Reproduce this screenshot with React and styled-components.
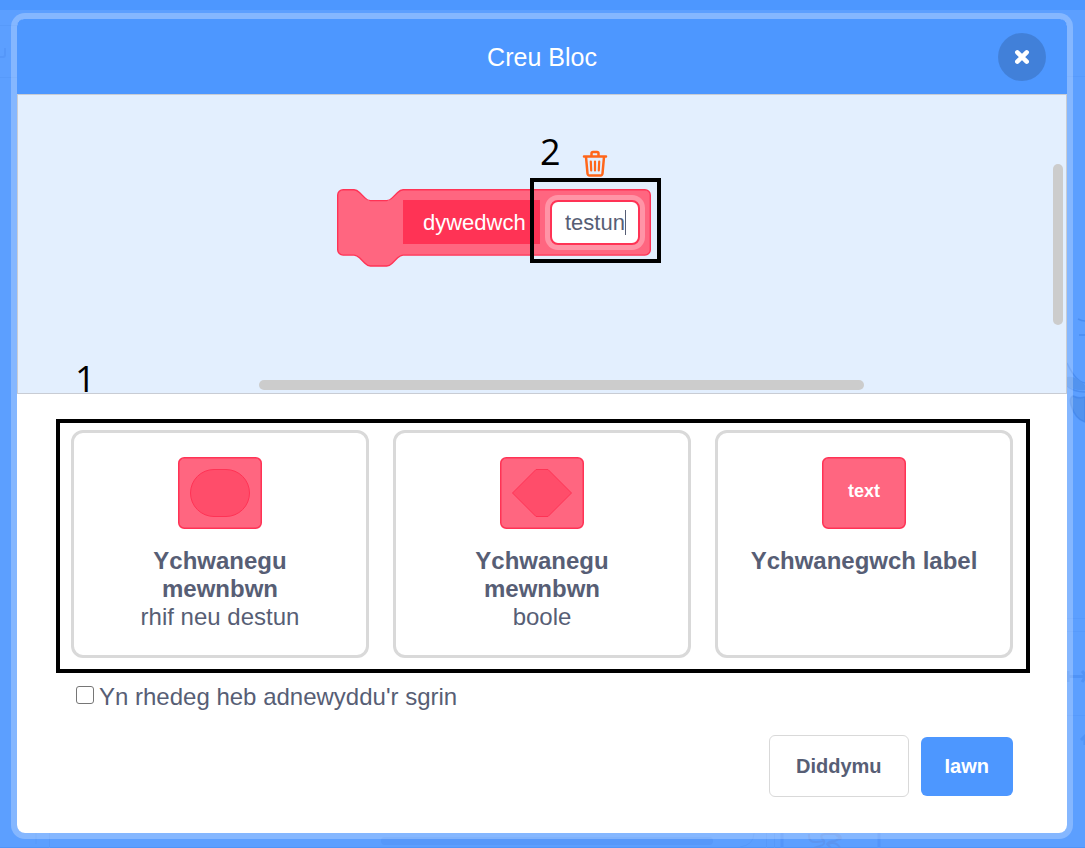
import React, { useState } from "react";
import styled, { createGlobalStyle } from "styled-components";

const color = {
  blue: "#4d97ff",
  backdrop: "#5c9fff",
  canvas: "#e3effe",
  text: "#575e75",
  line: "#d9d9d9",
  pink: "#ff6680",
  pinkMid: "#ff4d6a",
  pinkDark: "#ff3355",
};

const GlobalStyle = createGlobalStyle`
  *, *::before, *::after { box-sizing: border-box; }
  body {
    margin: 0;
    background: ${color.backdrop};
    color: ${color.text};
    font-family: "Liberation Sans", Arial, Helvetica, sans-serif;
  }
  button, input { font-family: inherit; margin: 0; }
`;

const Page = styled.div`
  position: relative;
  display: flex;
  min-height: 100vh;
  padding: 13px 12px 9px 11px;
  overflow: hidden;
`;

const Backdrop = styled.div`
  position: absolute;
  inset: 0;
  border-top: 10px solid ${color.blue};
  border-bottom: 1px solid #4f94f8;
`;

const EdgeArt = styled.svg`
  position: absolute;
  top: -10px;
  ${(p) => p.$side}: 0;
`;

const BottomArt = styled.svg`
  position: absolute;
  left: 0;
  bottom: -1px;
`;

const Modal = styled.main`
  position: relative;
  flex: 1;
  display: flex;
  flex-direction: column;
  border: 6px solid rgba(255, 255, 255, 0.25);
  border-radius: 14px;
  background: #fff;
  background-clip: padding-box;
`;

const Header = styled.header`
  display: grid;
  grid-template-columns: 48px 1fr 48px;
  align-items: center;
  height: 75px;
  padding: 0 21px;
  border-radius: 7px 7px 0 0;
  background: ${color.blue};
`;

const Title = styled.h1`
  grid-column: 2;
  margin: 0;
  color: #fff;
  font-size: 25px;
  font-weight: 400;
  line-height: 28px;
  text-align: center;
`;

const CloseButton = styled.button`
  display: grid;
  place-items: center;
  width: 48px;
  height: 48px;
  padding: 0;
  border: 0;
  border-radius: 50%;
  background: rgba(0, 0, 0, 0.15);
  cursor: pointer;
`;

const Workspace = styled.section`
  position: relative;
  height: 300px;
  border: 1px solid #c8ccd4;
  background: ${color.canvas};
`;

const Scrollbar = styled.div`
  position: absolute;
  border-radius: 5px;
  background: #ccc;
  ${(p) =>
    p.$vertical
      ? "top: 69px; right: 3px; width: 10px; height: 161px;"
      : "left: 241px; right: 202px; bottom: 3px; height: 10px;"}
`;

const Block = styled.div`
  position: absolute;
  top: 94px;
  left: 319px;
  display: flex;
  align-items: flex-start;
  gap: 10px;
  width: 314px;
  height: 78px;
  padding: 11px 0 0 66px;
`;

const BlockShape = styled.svg`
  position: absolute;
  inset: 0;
`;

const BlockLabel = styled.span`
  position: relative;
  width: 137px;
  height: 44px;
  padding-left: 20px;
  background: ${color.pinkDark};
  color: #fff;
  font-size: 22px;
  line-height: 46px;
`;

const Argument = styled.div`
  position: relative;
  display: flex;
  align-items: center;
  width: 90px;
  height: 45px;
  padding-left: 13px;
  border: 2px solid ${color.pinkDark};
  border-radius: 8px;
  background: #fff;
  box-shadow: 0 0 0 5px #ff94a6;
`;

const ArgumentInput = styled.input`
  width: 60px;
  padding: 0;
  border: 0;
  outline: 0;
  background: transparent;
  color: ${color.text};
  font-size: 22px;
  line-height: 26px;
`;

const Caret = styled.span`
  width: 1px;
  height: 25px;
  background: ${color.text};
`;

const DeleteButton = styled.button`
  position: absolute;
  top: 55px;
  left: 564px;
  width: 26px;
  height: 28px;
  padding: 0;
  border: 0;
  background: none;
  cursor: pointer;
`;

const Callout = styled.div`
  position: absolute;
  top: 83px;
  left: 512px;
  width: 131px;
  height: 85px;
  border: 4px solid #000;
  pointer-events: none;
`;

const StepNumber = styled.span`
  position: absolute;
  top: ${(p) => p.$top}px;
  left: ${(p) => p.$left}px;
  color: #000;
  font-family: "Open Sans", "Noto Sans", sans-serif;
  font-size: 36px;
  font-weight: 400;
  line-height: 40px;
`;

const Body = styled.div`
  display: flex;
  flex-direction: column;
  padding: 25px 37px 36px 39px;
`;

const OptionGroup = styled.div`
  display: grid;
  grid-template-columns: repeat(3, 1fr);
  gap: 24px;
  padding: 7px 13px 11px 11px;
  border: 4px solid #000;
`;

const OptionCard = styled.button`
  display: flex;
  flex-direction: column;
  align-items: center;
  height: 228px;
  padding: 24px 30px;
  border: 3px solid ${color.line};
  border-radius: 12px;
  background: #fff;
  color: ${color.text};
  font-size: 24px;
  line-height: 28px;
  text-align: center;
  cursor: pointer;
`;

const OptionIcon = styled.svg`
  flex: none;
  margin-bottom: 18px;
`;

const OptionTitle = styled.span`
  font-weight: 700;
`;

const CheckRow = styled.label`
  display: flex;
  align-items: center;
  align-self: flex-start;
  gap: 5px;
  margin: 10px 0 24px 20px;
  font-size: 24px;
  line-height: 28px;
`;

const Checkbox = styled.input`
  appearance: none;
  width: 18px;
  height: 18px;
  margin-bottom: 4px;
  border: 1px solid #767676;
  border-radius: 3px;
  background: #fff;
  &:checked { background: ${color.blue}; }
`;

const Actions = styled.div`
  display: flex;
  align-items: center;
  justify-content: flex-end;
  gap: 12px;
  padding-right: 17px;
`;

const ActionButton = styled.button`
  height: ${(p) => (p.$primary ? 59 : 62)}px;
  padding: 0 ${(p) => (p.$primary ? 24 : 26)}px;
  border: ${(p) => (p.$primary ? "0" : `1px solid ${color.line}`)};
  border-radius: 6px;
  background: ${(p) => (p.$primary ? color.blue : "#fff")};
  color: ${(p) => (p.$primary ? "#fff" : color.text)};
  font-size: 20px;
  font-weight: 700;
  cursor: pointer;
`;

function BackgroundArt() {
  return (
    <Backdrop aria-hidden="true">
      <EdgeArt $side="left" width="17" height="848" fill="none" stroke="#4c8df0">
        <path d="M0 25.500H17M0 77.500H17" strokeOpacity=".3" />
        <path d="M0 57H3q2 0 2-2V48" strokeWidth="2" strokeOpacity=".4" />
      </EdgeArt>
      <EdgeArt $side="right" width="20" height="848" fill="none" stroke="#3f82e8">
        <path d="M2 76.500H20M2 618.500H20M2 631.500H20M2 715.500H20" strokeOpacity=".15" />
        <path d="M13 319q4 2 7 2M14 335H20M2 363q9 19 18 20M2 386q7 6 18 6" strokeWidth="1.500" strokeOpacity=".6" />
        <path d="M20 397q-6 2-12-1-4 2-2 9 4 14 14 17z" fill="#5293ef" strokeWidth="1.500" strokeOpacity=".6" />
        <path d="M2 377q8-2 18 8v5q-10 1-18-4z" fill="#5293ef" stroke="none" />
        <path d="M3 676.500H20M3 671v11M17 671l4 5-4 6" strokeWidth="3" strokeOpacity=".4" />
        <path d="M16 740l4-4v9" strokeWidth="3" strokeOpacity=".4" />
      </EdgeArt>
      <BottomArt width="900" height="15" fill="none">
        <rect x="381" y="4" width="332" height="8" rx="4" fill="#5698fa" />
        <path d="M36 0v11M49.500 0v15M766.500 0v15M774.500 0v15M740 14q14-2 14-14" stroke="#5799fa" />
        <path d="M782 0v15M879 0v15" stroke="#5395fa" strokeWidth="3" />
        <path d="M809 1q-1 9 8 8l7-1q1 4-4 5l-6 2M824 8q-6-6 1-7h9q6 0 7 4l-6 3q-6 0-8 3l4 4M836 2q7 5 3 4M828 11q8-3 12 4" stroke="#5c90e6" strokeWidth="2" opacity=".6" />
      </BottomArt>
    </Backdrop>
  );
}

function PinkTile({ children }) {
  return (
    <OptionIcon width="84" height="72" viewBox="0 0 84 72" aria-hidden="true">
      <rect x=".75" y=".75" width="82.500" height="70.500" rx="5.500" fill={color.pink} stroke={color.pinkDark} strokeWidth="1.500" />
      {children}
    </OptionIcon>
  );
}

export default function App() {
  const [argument, setArgument] = useState("testun");
  return (
    <>
      <GlobalStyle />
      <Page>
        <BackgroundArt />
        <Modal role="dialog" aria-labelledby="dialog-title">
          <Header>
            <Title id="dialog-title">Creu Bloc</Title>
            <CloseButton type="button" aria-label="Cau">
              <svg width="16" height="16" viewBox="0 0 16 16">
                <path d="M3.300 3.300l9.400 9.400M12.700 3.300l-9.400 9.400" stroke="#fff" strokeWidth="4.500" strokeLinecap="round" />
              </svg>
            </CloseButton>
          </Header>

          <Workspace>
            <Scrollbar $vertical />
            <Scrollbar />
            <Block>
              <BlockShape width="314" height="78" viewBox="-0.5 -0.5 230.4 57.2" aria-hidden="true">
                <path
                  d="M0 4A4 4 0 0 1 4 0H12c2 0 3 1 4 2l4 4c1 1 2 2 4 2h12c2 0 3-1 4-2l4-4c1-1 2-2 4-2H225.400a4 4 0 0 1 4 4V44a4 4 0 0 1-4 4H48c-2 0-3 1-4 2l-4 4c-1 1-2 2-4 2H24c-2 0-3-1-4-2l-4-4c-1-1-2-2-4-2H4a4 4 0 0 1-4-4z"
                  fill={color.pink}
                  stroke={color.pinkDark}
                />
              </BlockShape>
              <BlockLabel>dywedwch</BlockLabel>
              <Argument>
                <ArgumentInput
                  aria-label="Enw mewnbwn"
                  value={argument}
                  onChange={(e) => setArgument(e.target.value)}
                />
                <Caret />
              </Argument>
            </Block>
            <DeleteButton type="button" aria-label="Dileu">
              <svg width="26" height="28" viewBox="0 0 26 28" fill="none" stroke="#ff661a" strokeLinecap="round" strokeLinejoin="round">
                <path d="M2 6.500H24M9.500 6V3.500q0-1.500 1.500-1.500h4q1.500 0 1.500 1.500V6M4 7l1.500 16.500q.2 2 2 2h11q1.800 0 2-2L22 7" strokeWidth="2.500" />
                <path d="M8.800 11.500l.4 9M13 11.500v9M17.200 11.500l-.4 9" strokeWidth="2.200" />
              </svg>
            </DeleteButton>
            <Callout />
            <StepNumber $top={37} $left={522}>2</StepNumber>
            <StepNumber $top={264} $left={57}>1</StepNumber>
          </Workspace>

          <Body>
            <OptionGroup>
              <OptionCard type="button">
                <PinkTile>
                  <rect x="12.500" y="12.500" width="59" height="47" rx="23.500" fill={color.pinkMid} stroke={color.pinkDark} />
                </PinkTile>
                <OptionTitle>Ychwanegu mewnbwn</OptionTitle>
                <span>rhif neu destun</span>
              </OptionCard>
              <OptionCard type="button">
                <PinkTile>
                  <path d="M12.500 36L36 12.500H48L71.500 36L48 59.500H36z" fill={color.pinkMid} stroke={color.pinkDark} strokeLinejoin="round" />
                </PinkTile>
                <OptionTitle>Ychwanegu mewnbwn</OptionTitle>
                <span>boole</span>
              </OptionCard>
              <OptionCard type="button">
                <PinkTile>
                  <text x="42" y="40" fill="#fff" fontSize="18" fontWeight="700" textAnchor="middle">text</text>
                </PinkTile>
                <OptionTitle>Ychwanegwch label</OptionTitle>
              </OptionCard>
            </OptionGroup>
            <CheckRow>
              <Checkbox type="checkbox" />
              Yn rhedeg heb adnewyddu'r sgrin
            </CheckRow>
            <Actions>
              <ActionButton type="button">Diddymu</ActionButton>
              <ActionButton type="button" $primary>Iawn</ActionButton>
            </Actions>
          </Body>
        </Modal>
      </Page>
    </>
  );
}
